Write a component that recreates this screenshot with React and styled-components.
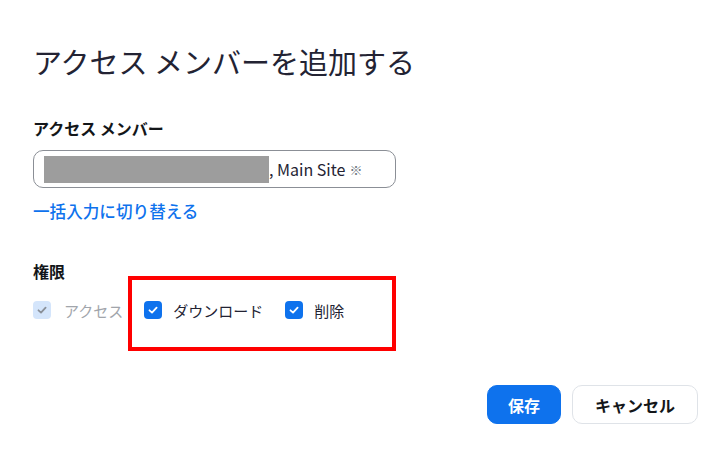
import React from 'react';
import styled, { createGlobalStyle } from 'styled-components';

const GlobalStyle = createGlobalStyle`
  body {
    margin: 0;
    background: #ffffff;
    font-family: 'Noto Sans CJK JP', 'Noto Sans', sans-serif;
    color: #232333;
  }
`;

const Dialog = styled.div`
  width: 726px;
  height: 458px;
  box-sizing: border-box;
  padding: 41px 28px 0 33px;
  display: flex;
  flex-direction: column;
`;

const Title = styled.h1`
  margin: 0;
  font-size: 29px;
  font-weight: 400;
  line-height: 40px;
  color: #232333;
`;

const Label = styled.div`
  margin-top: ${props => props.top}px;
  font-size: 16px;
  font-weight: 700;
  line-height: 24px;
  color: #131619;
`;

const Field = styled.div`
  margin-top: 10px;
  width: 363px;
  height: 38px;
  box-sizing: border-box;
  border: 1px solid #8b8f96;
  border-radius: 10px;
  display: flex;
  align-items: center;
  padding-left: 10px;
  font-size: 16px;
  color: #232333;
`;

const Redacted = styled.span`
  display: inline-block;
  width: 225px;
  height: 27px;
  background: #9d9d9d;
`;

const Mark = styled.span`
  margin-left: 4px;
  font-size: 13px;
  color: #6e7680;
`;

const SwitchLink = styled.a`
  margin-top: 11px;
  font-size: 16.6px;
  font-weight: 500;
  line-height: 24px;
  color: #0e72ed;
  text-decoration: none;
  align-self: flex-start;
  cursor: pointer;
`;

const Options = styled.div`
  margin-top: 15px;
  display: flex;
  align-items: center;
  gap: 21px;
  height: 24px;
`;

const Highlight = styled.div`
  position: relative;
  display: flex;
  align-items: center;
  gap: 22px;

  &::after {
    content: '';
    position: absolute;
    left: -16px;
    top: -24px;
    width: 268px;
    height: 75px;
    box-sizing: border-box;
    border: 4px solid #ff0000;
    pointer-events: none;
  }
`;

const Option = styled.label`
  display: flex;
  align-items: center;
  gap: ${props => props.gap || 11}px;
  font-size: 15px;
  color: ${props => (props.disabled ? '#a1a5ab' : '#232333')};
`;

const Box = styled.span`
  width: 18px;
  height: 18px;
  border-radius: 4px;
  background: ${props => (props.disabled ? '#d4e5fb' : '#0e72ed')};
  display: flex;
  align-items: center;
  justify-content: center;
`;

const Footer = styled.div`
  margin-top: 63px;
  display: flex;
  justify-content: flex-end;
  gap: 11px;
`;

const Button = styled.button`
  height: 39px;
  padding: 0 ${props => (props.primary ? 20 : 22)}px;
  border-radius: 10px;
  font-family: 'Noto Sans CJK JP', 'Noto Sans', sans-serif;
  font-size: 16px;
  font-weight: 700;
  cursor: pointer;
  border: 1px solid ${props => (props.primary ? '#0e72ed' : '#dfe3e8')};
  background: ${props => (props.primary ? '#0e72ed' : '#ffffff')};
  color: ${props => (props.primary ? '#ffffff' : '#131619')};
`;

const Check = ({ color }) => (
  <svg width="12" height="12" viewBox="0 0 12 12">
    <path d="M2.5 6.3 L5 8.6 L9.6 3.6" fill="none" stroke={color} strokeWidth="1.8" strokeLinecap="round" strokeLinejoin="round" />
  </svg>
);

const CheckItem = ({ label, disabled, gap }) => (
  <Option disabled={disabled} gap={gap}>
    <Box disabled={disabled}>
      <Check color={disabled ? '#8a9099' : '#ffffff'} />
    </Box>
    {label}
  </Option>
);

export default function App() {
  return (
    <>
      <GlobalStyle />
      <Dialog>
        <Title>アクセス メンバーを追加する</Title>
        <Label top={35}>アクセス メンバー</Label>
        <Field>
          <Redacted />
          , Main Site
          <Mark>※</Mark>
        </Field>
        <SwitchLink>一括入力に切り替える</SwitchLink>
        <Label top={36}>権限</Label>
        <Options>
          <CheckItem label="アクセス" disabled gap={13} />
          <Highlight>
            <CheckItem label="ダウンロード" />
            <CheckItem label="削除" />
          </Highlight>
        </Options>
        <Footer>
          <Button primary>保存</Button>
          <Button>キャンセル</Button>
        </Footer>
      </Dialog>
    </>
  );
}
